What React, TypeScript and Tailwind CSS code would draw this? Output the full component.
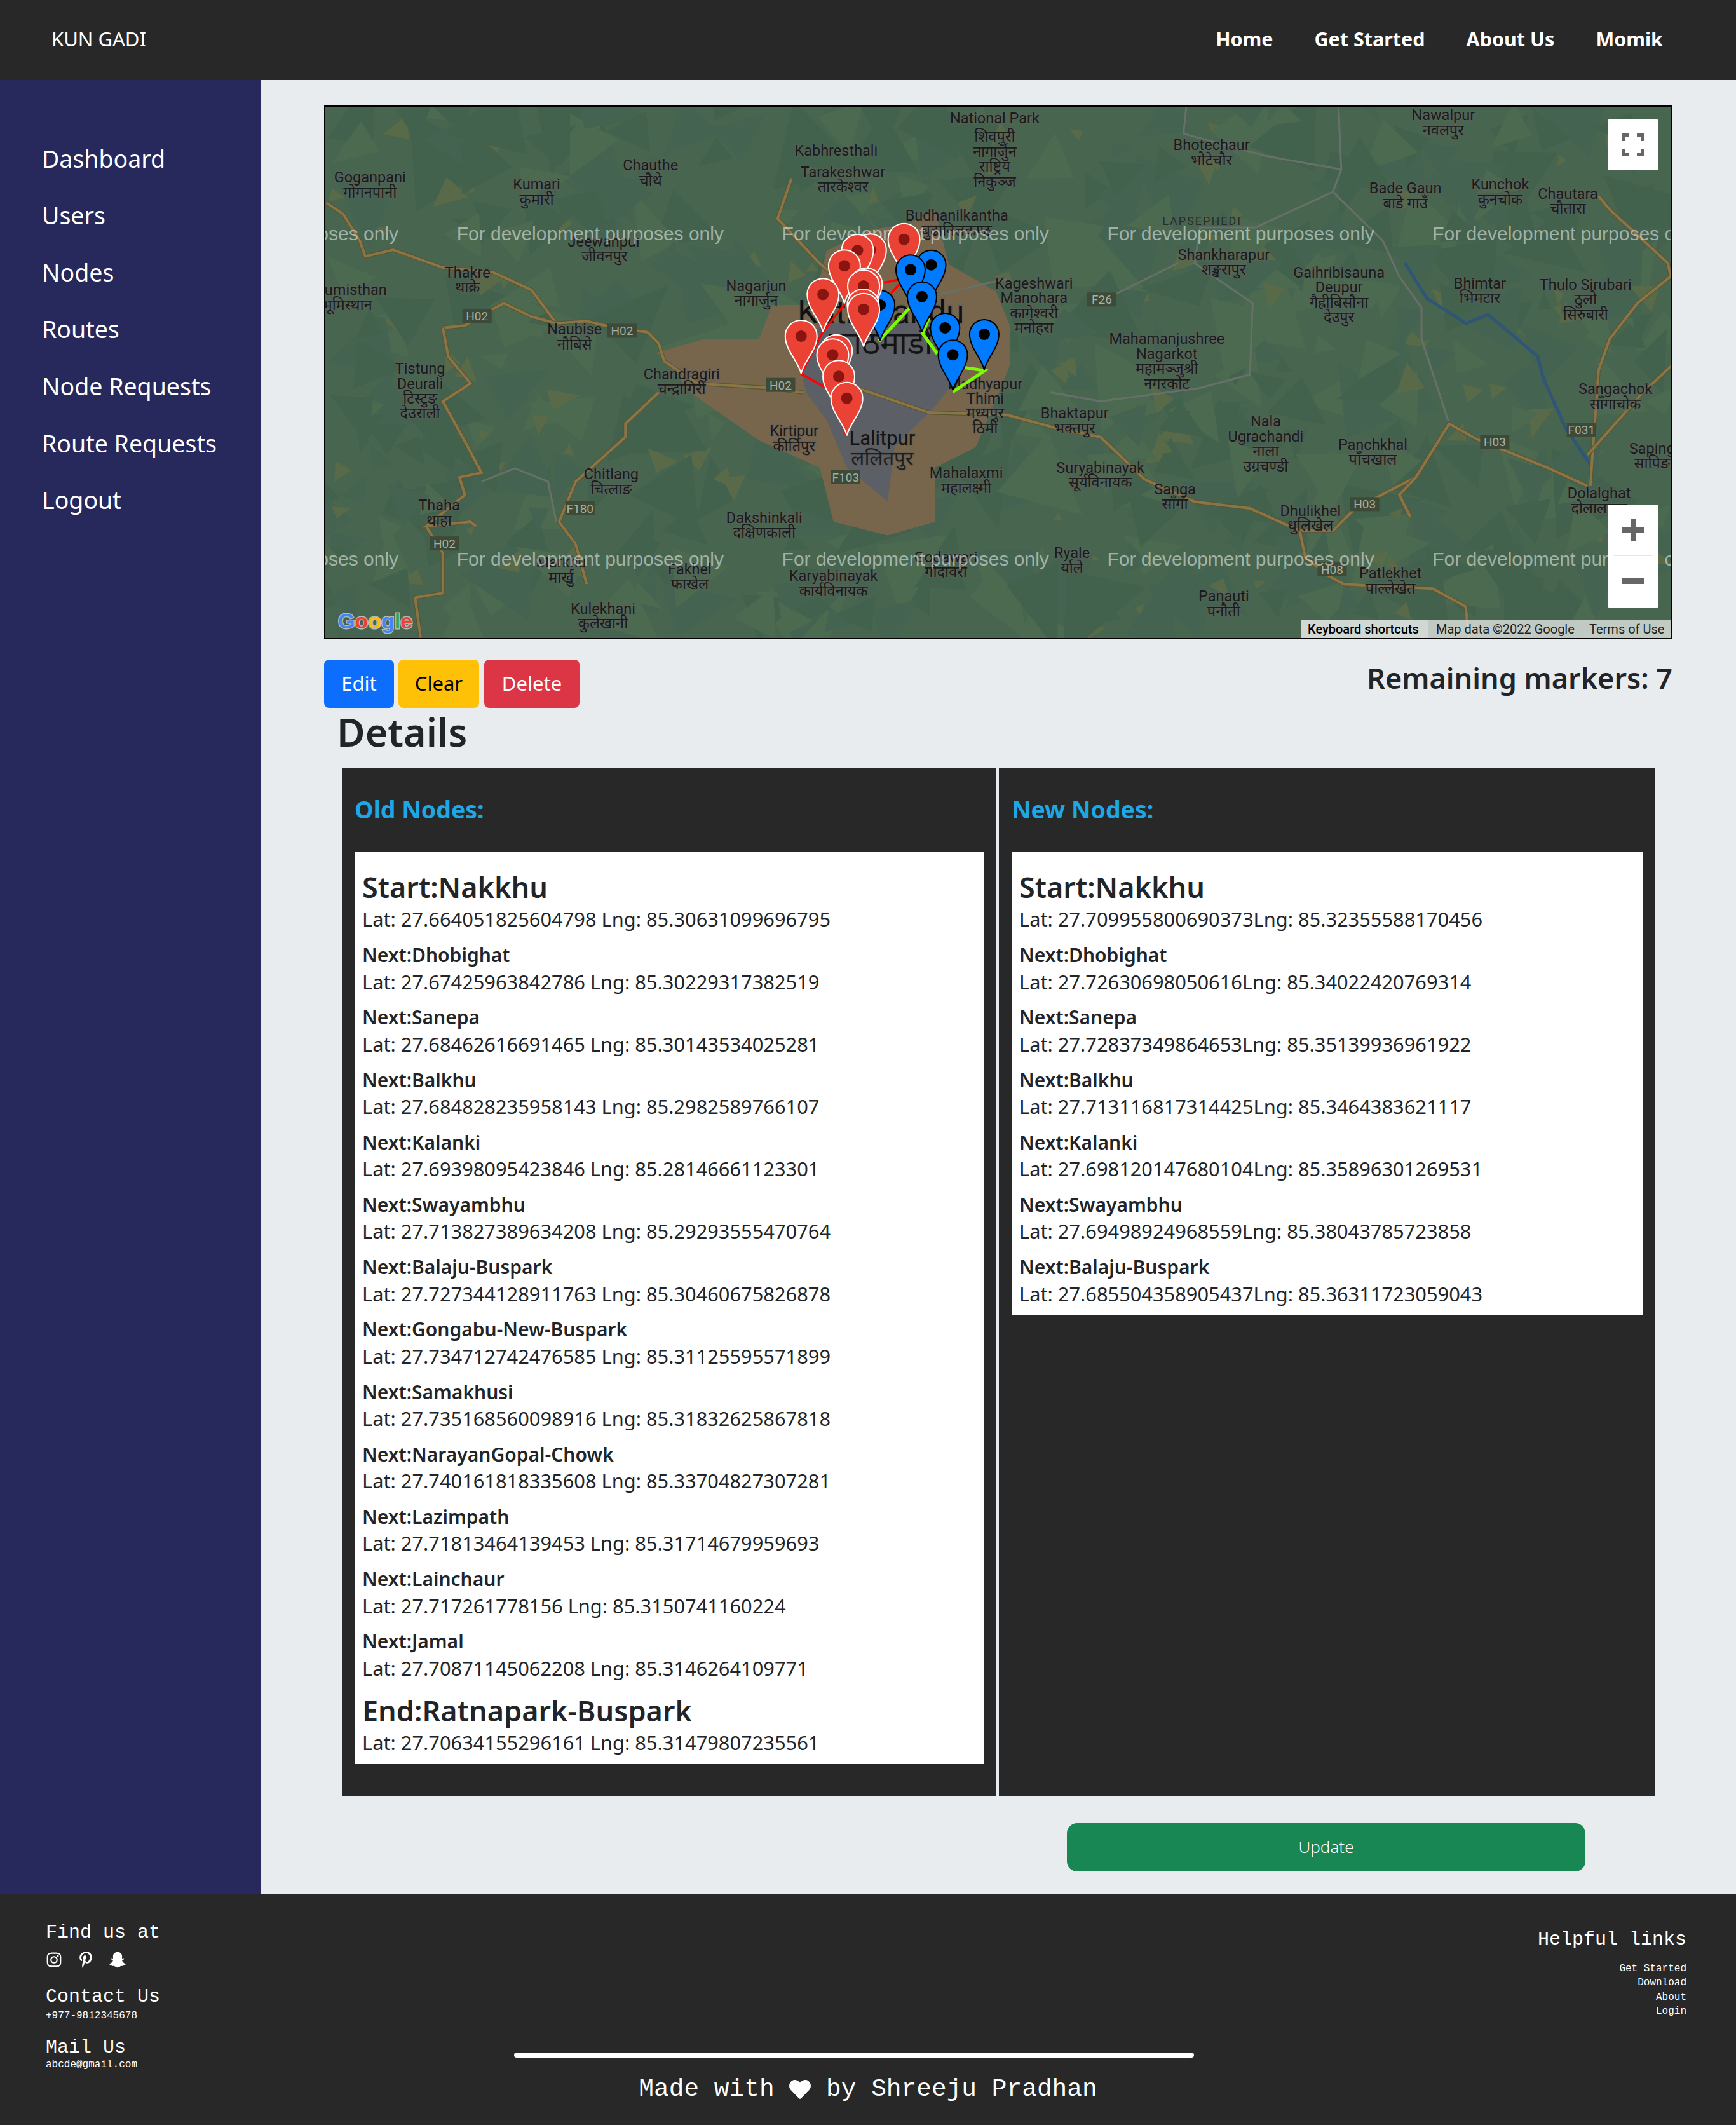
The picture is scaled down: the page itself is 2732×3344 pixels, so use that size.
import React from "react";
import { FaInstagram, FaPinterestP, FaSnapchatGhost, FaHeart } from "react-icons/fa";

const SH = 2.1327;

type Pt = [number, number];

// coordinates read off the different crops, all turned into page pixels
const sh = (p: Pt[]) => p.map(([x, y]) => `${(x * SH).toFixed(1)},${(y * SH).toFixed(1)}`).join(" ");
const z1 = (p: Pt[]) => p.map(([x, y]) => `${(x / 1.148).toFixed(1)},${(y / 1.425).toFixed(1)}`).join(" ");
const z3 = (p: Pt[]) => p.map(([x, y]) => `${(1366 + x / 1.148).toFixed(1)},${(y / 1.425).toFixed(1)}`).join(" ");
const z2 = (x: number, y: number): Pt => [1100 + x / 2.613, 250 + y / 3];

const oldNodes = [
  ["Dhobighat", "27.67425963842786", "85.30229317382519"],
  ["Sanepa", "27.68462616691465", "85.30143534025281"],
  ["Balkhu", "27.684828235958143", "85.2982589766107"],
  ["Kalanki", "27.69398095423846", "85.28146661123301"],
  ["Swayambhu", "27.713827389634208", "85.29293555470764"],
  ["Balaju-Buspark", "27.727344128911763", "85.30460675826878"],
  ["Gongabu-New-Buspark", "27.734712742476585", "85.31125595571899"],
  ["Samakhusi", "27.735168560098916", "85.31832625867818"],
  ["NarayanGopal-Chowk", "27.740161818335608", "85.33704827307281"],
  ["Lazimpath", "27.71813464139453", "85.31714679959693"],
  ["Lainchaur", "27.717261778156", "85.3150741160224"],
  ["Jamal", "27.70871145062208", "85.3146264109771"],
];

const newNodes = [
  ["Dhobighat", "27.72630698050616", "85.34022420769314"],
  ["Sanepa", "27.72837349864653", "85.35139936961922"],
  ["Balkhu", "27.713116817314425", "85.3464383621117"],
  ["Kalanki", "27.698120147680104", "85.35896301269531"],
  ["Swayambhu", "27.69498924968559", "85.38043785723858"],
  ["Balaju-Buspark", "27.685504358905437", "85.36311723059043"],
];

const labels: [number, number, string[]][] = [
  [273, 131, ["Goganpani", "गोगनपानी"]],
  [396, 136, ["Kumari", "कुमारी"]],
  [480, 122, ["Chauthe", "चौथे"]],
  [617, 111, ["Kabhresthali"]],
  [622, 127, ["Tarakeshwar", "तारकेश्वर"]],
  [446, 178, ["Jeewanpur", "जीवनपुर"]],
  [345, 201, ["Thakre", "थाक्रे"]],
  [558, 211, ["Nagarjun", "नागार्जुन"]],
  [424, 243, ["Naubise", "नौबिसे"]],
  [310, 272, ["Tistung", "Deurali", "टिस्टुङ", "देउराली"]],
  [503, 276, ["Chandragiri", "चन्द्रागिरी"]],
  [586, 318, ["Kirtipur", "कीर्तिपुर"]],
  [451, 350, ["Chitlang", "चित्लाङ"]],
  [324, 373, ["Thaha", "थाहा"]],
  [564, 382, ["Dakshinkali", "दक्षिणकाली"]],
  [414, 415, ["Markhu", "मार्खु"]],
  [509, 420, ["Fakhel", "फाखेल"]],
  [615, 425, ["Karyabinayak", "कार्यविनायक"]],
  [445, 449, ["Kulekhani", "कुलेखानी"]],
  [256, 214, ["Bhumisthan", "भूमिस्थान"]],
  [734, 87, ["National Park"]],
  [734, 101, ["शिवपुरी", "नागार्जुन", "राष्ट्रिय", "निकुञ्ज"]],
  [706, 159, ["Budhanilkantha", "बुढानिलकण्ठ"]],
  [894, 107, ["Bhotechaur", "भोटेचौर"]],
  [1065, 85, ["Nawalpur", "नवलपुर"]],
  [1037, 139, ["Bade Gaun", "बाडे गाउँ"]],
  [1107, 136, ["Kunchok", "कुनचोक"]],
  [1157, 143, ["Chautara", "चौतारा"]],
  [903, 188, ["Shankharapur", "शङ्खरापुर"]],
  [763, 209, ["Kageshwari", "Manohara", "कागेश्वरी", "मनोहरा"]],
  [988, 201, ["Gaihribisauna", "Deupur", "गैह्रीबिसौना", "देउपुर"]],
  [1092, 209, ["Bhimtar", "भिमटार"]],
  [1170, 210, ["Thulo Sirubari", "ठुलो", "सिरुबारी"]],
  [861, 250, ["Mahamanjushree", "Nagarkot", "महामञ्जुश्री", "नगरकोट"]],
  [727, 283, ["Madhyapur", "Thimi", "मध्यपुर", "ठिमी"]],
  [793, 305, ["Bhaktapur", "भक्तपुर"]],
  [1192, 287, ["Sangachok", "साँगाचोक"]],
  [934, 311, ["Nala", "Ugrachandi", "नाला", "उग्रचण्डी"]],
  [1013, 328, ["Panchkhal", "पाँचखाल"]],
  [1219, 331, ["Saping", "सापिङ"]],
  [1180, 364, ["Dolalghat", "दोलालघाट"]],
  [713, 349, ["Mahalaxmi", "महालक्ष्मी"]],
  [812, 345, ["Suryabinayak", "सूर्यविनायक"]],
  [867, 361, ["Sanga", "साँगा"]],
  [967, 377, ["Dhulikhel", "धुलिखेल"]],
  [698, 411, ["Godawari", "गोदावरी"]],
  [791, 408, ["Ryale", "र्याले"]],
  [1026, 423, ["Patlekhet", "पाल्लेखेत"]],
  [903, 440, ["Panauti", "पनौती"]],
];

const badges: [number, number, string][] = [
  [352, 233, "H02"], [459, 244, "H02"], [576, 284, "H02"], [328, 401, "H02"],
  [428, 375, "F180"], [624, 352, "F103"], [813, 221, "F26"], [1103, 326, "H03"],
  [1007, 372, "H03"], [983, 420, "H08"], [1167, 317, "F031"],
];

const roads = [
  z1([[590, 455], [620, 480], [650, 540], [660, 575], [710, 560], [800, 600], [890, 610], [960, 650], [1005, 725], [1060, 720], [1110, 735], [1170, 745], [1190, 770], [1200, 810], [1260, 860], [1390, 870], [1450, 880]]),
  z1([[800, 735], [840, 730], [880, 700], [910, 680], [960, 710], [1005, 725]]),
  z1([[800, 735], [810, 800], [850, 860], [800, 900], [840, 990], [870, 1060], [830, 1070], [840, 1110], [770, 1180], [850, 1170], [860, 1180]]),
  z1([[770, 1180], [800, 1240], [800, 1330], [750, 1340], [760, 1430]]),
  z1([[1190, 880], [1130, 950], [1130, 980], [1040, 1080], [1010, 1170], [1040, 1220], [1060, 1310]]),
  z1([[1430, 400], [1405, 490], [1480, 590], [1530, 640]]),
  z3([[-20, 870], [110, 925], [250, 930], [340, 960], [420, 980], [500, 1075], [590, 1125], [690, 1140], [780, 1190], [840, 1190], [880, 1140], [990, 1070], [1050, 950], [1100, 985], [1150, 1010], [1230, 1050], [1300, 1090]]),
  z3([[780, 1190], [790, 1250], [830, 1290], [860, 1310], [1020, 1320], [1080, 1360], [1085, 1432]]),
  z3([[990, 1070], [960, 1110], [980, 1160]]),
  z3([[1320, 440], [1340, 470], [1445, 590], [1450, 620], [1390, 680], [1340, 760], [1320, 830], [1310, 1000], [1305, 1090]]),
  z3([[1452, 820], [1400, 880], [1300, 1020]]),
];

const minorRoads = [
  z1([[870, 1080], [930, 1050], [990, 1080], [1005, 1170]]),
  z3([[850, 240], [855, 380], [840, 430], [930, 540], [960, 620], [1000, 690], [1000, 760], [1050, 950]]),
  z3([[840, 430], [700, 510], [600, 510], [590, 590], [695, 680], [690, 840], [600, 870], [420, 900], [330, 880]]),
  z3([[575, 240], [570, 300], [720, 350], [855, 380]]),
  z3([[430, 670], [560, 590]]),
  z3([[250, 625], [130, 660]]),
];

// low poly relief, seeded so that every load gives the same picture
const relief = (() => {
  let seed = 7;
  const rnd = () => {
    seed = (seed * 16807) % 2147483647;
    return seed / 2147483647;
  };
  const out: { d: string; fill: string }[] = [];
  for (let i = 0; i < 560; i++) {
    const x = 512 + rnd() * 2118;
    const y = 168 + rnd() * 836;
    const k = rnd();
    const olive = k < 0.2;
    const s = olive ? 8 + rnd() * 20 : 20 + rnd() * 50;
    const a = rnd() * 6.28;
    const p = [0, 2.2, 4.1].map((t) => {
      const r = s * (0.5 + rnd());
      return `${(x + Math.cos(a + t) * r).toFixed(0)},${(y + Math.sin(a + t) * r).toFixed(0)}`;
    });
    out.push({ d: p.join(" "), fill: olive ? "#586a48" : k < 0.5 ? "#43624d" : k < 0.75 ? "#4b6a50" : "#446350" });
  }
  return out;
})();

const redPins: Pt[] = [
  z2(843, 380), z2(705, 430), z2(652, 432), z2(598, 505), z2(688, 590), z2(677, 600),
  z2(510, 640), z2(420, 837), z2(565, 905), z2(550, 925), z2(575, 1027), z2(675, 690), z2(677, 710), z2(608, 1130),
];
const bluePins: Pt[] = [z2(955, 500), z2(870, 523), z2(917, 650), z2(1012, 798), z2(1044, 925), z2(1173, 828)];

const redLines: Pt[][] = [
  [z2(608, 1308), z2(530, 1085), z2(420, 1015), z2(510, 815), z2(600, 685)],
  [z2(790, 635), z2(825, 590)],
  [z2(760, 585), z2(820, 570)],
];
const greenLines: Pt[][] = [
  [z2(740, 860), z2(865, 705)],
  [z2(945, 750), z2(920, 825), z2(980, 920)],
  [z2(1090, 985), z2(1175, 1000), z2(1044, 1100)],
];

const pagePts = (p: Pt[]) => p.map(([x, y]) => `${x.toFixed(1)},${y.toFixed(1)}`).join(" ");

const Pin = ({ at, blue }: { at: Pt; blue?: boolean }) => (
  <g transform={`translate(${at[0]} ${at[1]})`}>
    {blue ? (
      <>
        <path d="M0,56 C-4,38 -23,21 -23,0 A23,23 0 1 1 23,0 C23,21 4,38 0,56 Z" fill="#007bff" stroke="#000" strokeWidth="2" />
        <circle r="9" fill="#000" />
      </>
    ) : (
      <>
        <path d="M0,59 C-4,40 -25,22 -25,0 A25,25 0 1 1 25,0 C25,22 4,40 0,59 Z" fill="#ea4335" stroke="#fff" strokeWidth="2" />
        <circle r="9" fill="#8a1410" />
      </>
    )}
  </g>
);

const MapLayer = () => (
  <svg viewBox="512 168 2118 836" className="block w-[2118px] h-[836px]">
    <rect x="512" y="168" width="2118" height="836" fill="#47654f" />
    {relief.map((t, i) => (
      <polygon key={i} points={t.d} fill={t.fill} />
    ))}
    <polygon
      fill="#77664c"
      points={sh([[485, 260], [510, 290], [560, 325], [605, 345], [615, 385], [655, 395], [690, 385], [690, 345], [720, 330], [735, 295], [745, 270], [745, 240], [735, 215], [700, 195], [690, 155], [670, 165], [640, 170], [610, 185], [600, 225], [570, 225], [560, 250], [520, 250]])}
    />
    <polygon
      fill="#5c5f66"
      points={sh([[590, 270], [605, 240], [640, 235], [700, 240], [705, 280], [690, 300], [660, 330], [655, 370], [625, 345], [610, 310], [595, 290]])}
    />
    {minorRoads.map((r, i) => (
      <polyline key={i} points={r} fill="none" stroke="#68706a" strokeWidth="3" />
    ))}
    <polyline
      points={pagePts([[2211, 414], [2246, 470], [2307, 509], [2342, 495], [2420, 561], [2429, 596], [2464, 674], [2507, 737]])}
      fill="none"
      stroke="#2f5577"
      strokeWidth="5"
    />
    {roads.map((r, i) => (
      <g key={i}>
        <polyline points={r} fill="none" stroke="#55573a" strokeWidth="6.5" />
        <polyline points={r} fill="none" stroke="#8d7443" strokeWidth="4" />
      </g>
    ))}
    <g fontFamily="Roboto, 'Noto Sans', sans-serif" textAnchor="middle">
      <text x={650 * SH} y={230 * SH + 18} fontSize="51" fill="#111" stroke="#5a5a5a" strokeOpacity="0.5" strokeWidth="3" paintOrder="stroke">Kathmandu</text>
      <text x={650 * SH} y={253 * SH + 17} fontSize="50" fill="#141414" stroke="#5a5a5a" strokeOpacity="0.5" strokeWidth="3" paintOrder="stroke">काठमाडौं</text>
      <text x={651 * SH} y={323 * SH + 11} fontSize="31" fill="#141414" stroke="#5a5a5a" strokeOpacity="0.5" strokeWidth="3" paintOrder="stroke">Lalitpur</text>
      <text x={651 * SH} y={338 * SH + 11} fontSize="31" fill="#1e1e1e" stroke="#5a5a5a" strokeOpacity="0.5" strokeWidth="3" paintOrder="stroke">ललितपुर</text>
      {labels.map(([x, y, lines]) =>
        lines.map((line, i) => (
          <text
            key={line + x}
            x={x * SH}
            y={(y + i * 11) * SH + 8}
            fontSize="23.5"
            fill="#1b1b1b"
            stroke="#5f5f5f"
            strokeOpacity="0.55"
            strokeWidth="3"
            paintOrder="stroke"
          >
            {line}
          </text>
        ))
      )}
      <text x={887 * SH} y={163 * SH + 6} fontSize="18" letterSpacing="2" fill="#2c2c2c">LAPSEPHEDI</text>
      {badges.map(([x, y, name]) => (
        <g key={name + x}>
          <rect x={x * SH - 23} y={y * SH - 11} width="46" height="22" fill="#3d4a37" />
          <text x={x * SH} y={y * SH + 7} fontSize="19" fill="#a7aea2">{name}</text>
        </g>
      ))}
    </g>
    <g fontFamily="'Liberation Sans', sans-serif" fontSize="30" fill="#fff" fillOpacity="0.5">
      {[97, 337, 577, 817, 1057].map((x) =>
        [172, 412].map((y) => (
          <text key={`${x}-${y}`} x={x * SH} y={y * SH + 11}>For development purposes only</text>
        ))
      )}
    </g>
    {redLines.map((l, i) => (
      <polyline key={i} points={pagePts(l)} fill="none" stroke="#ff0000" strokeWidth="3.5" />
    ))}
    {greenLines.map((l, i) => (
      <polyline key={i} points={pagePts(l)} fill="none" stroke="#7cfc00" strokeWidth="5" />
    ))}
    <Pin at={z2(745, 690)} blue />
    {redPins.slice(0, 1).map((p, i) => (
      <Pin key={i} at={p} />
    ))}
    {bluePins.map((p, i) => (
      <Pin key={i} at={p} blue />
    ))}
    {redPins.slice(1).map((p, i) => (
      <Pin key={i} at={p} />
    ))}
    <text x="532" y="989" fontFamily="'Liberation Sans', sans-serif" fontSize="34" fontWeight="700" stroke="#d8d8d8" strokeOpacity="0.75" strokeWidth="3" paintOrder="stroke">
      <tspan fill="#4285f4">G</tspan>
      <tspan fill="#ea4335">o</tspan>
      <tspan fill="#fbbc05">o</tspan>
      <tspan fill="#4285f4">g</tspan>
      <tspan fill="#34a853">l</tspan>
      <tspan fill="#ea4335">e</tspan>
    </text>
  </svg>
);

const MapBox = () => (
  <div className="relative w-[2122px] h-[840px] border-2 border-black overflow-hidden">
    <MapLayer />
    <button className="absolute top-[20px] right-[20px] w-[80px] h-[80px] bg-white flex items-center justify-center rounded-[2px]">
      <svg viewBox="0 0 36 36" className="w-[36px] h-[36px]" fill="none" stroke="#666" strokeWidth="5">
        <path d="M2.5 12V2.5H12M24 2.5H33.5V12M33.5 24V33.5H24M12 33.5H2.5V24" />
      </svg>
    </button>
    <div className="absolute top-[626px] right-[20px] w-[80px] h-[162px] bg-white rounded-[2px] flex flex-col items-center">
      <svg viewBox="0 0 36 36" className="w-[36px] h-[36px] mt-[22px]" fill="#666">
        <path d="M14 0h8v14h14v8H22v14h-8V22H0v-8h14z" />
      </svg>
      <div className="w-[60px] h-[2px] bg-[#e6e6e6] mt-[21px]" />
      <svg viewBox="0 0 36 10" className="w-[36px] h-[10px] mt-[34px]" fill="#666">
        <path d="M0 0h36v10H0z" />
      </svg>
    </div>
    <div className="absolute bottom-0 right-0 h-[28px] w-[582px] flex items-center text-[20px] text-[#222] font-['Roboto',sans-serif] leading-none">
      <span className="h-full w-[199px] bg-[#f5f5f5]/80 pl-[10px] flex items-center font-medium text-black whitespace-nowrap">Keyboard shortcuts</span>
      <span className="h-full w-[242px] bg-[#f5f5f5]/70 border-l border-[#999] pl-[12px] flex items-center whitespace-nowrap">Map data ©2022 Google</span>
      <span className="h-full w-[141px] bg-[#f5f5f5]/70 border-l border-[#999] pl-[11px] flex items-center whitespace-nowrap">Terms of Use</span>
    </div>
  </div>
);

const NodeBlock = ({ title, lat, lng, big, tight }: { title: string; lat: string; lng: string; big?: boolean; tight?: boolean }) => (
  <div className={big ? "" : "mt-[13.8px]"}>
    <div className={big ? "text-[45px] leading-[57.6px] font-semibold text-[#212529]" : "text-[30px] leading-[38.4px] font-semibold text-[#212529]"}>
      {title}
    </div>
    <div className="-mt-[2px] text-[30.8px] leading-[48px] text-[#212529] whitespace-nowrap">
      Lat: {lat}
      {tight ? "" : " "}Lng: {lng}
    </div>
  </div>
);

const navItems = ["Dashboard", "Users", "Nodes", "Routes", "Node Requests", "Route Requests", "Logout"];

export default function App() {
  return (
    <div className="w-[2732px] h-[3344px] flex flex-col font-['Noto_Sans',sans-serif] bg-[#e9ecef]">
      <header className="h-[126px] shrink-0 bg-[#282828] text-white flex items-center justify-between pl-[81px] pr-[115px] pb-[3px]">
        <span className="text-[31px]">KUN GADI</span>
        <nav className="flex gap-[65px] text-[30.5px] font-bold">
          <a>Home</a>
          <a>Get Started</a>
          <a>About Us</a>
          <a>Momik</a>
        </nav>
      </header>

      <div className="flex h-[2854px]">
        <aside className="w-[410px] shrink-0 bg-[#27285c] pt-[79px] pl-[66px] text-white">
          {navItems.map((item) => (
            <div key={item} className="h-[89.6px] flex items-center text-[37.5px] whitespace-nowrap">
              {item}
            </div>
          ))}
        </aside>

        <main className="flex-1 pt-[40px] pl-[100px]">
          <MapBox />

          <div className="w-[2122px] mt-[32px] flex justify-between items-start">
            <div className="flex">
              <button className="h-[76px] w-[110px] pb-[2px] rounded-[8px] bg-[#0d6efd] text-white text-[31px]">Edit</button>
              <button className="h-[76px] w-[127px] pb-[2px] ml-[7px] rounded-[8px] bg-[#ffc107] text-black text-[31px]">Clear</button>
              <button className="h-[76px] w-[150px] pb-[2px] ml-[8px] rounded-[8px] bg-[#dc3545] text-white text-[31px]">Delete</button>
            </div>
            <div className="text-[45px] leading-[57.6px] font-semibold text-[#212529]">Remaining markers: 7</div>
          </div>

          <h2 className="ml-[20px] text-[61px] leading-[76.8px] font-semibold text-[#212529]">Details</h2>

          <div className="ml-[28px] mt-[17px] w-[2067px] grid grid-cols-[1030px_1033px] gap-[4px]">
            <section className="bg-[#282828] h-[1619px] px-[20px]">
              <div className="h-[133px] flex items-center text-[37.5px] font-bold text-[#1ea7e6]">Old Nodes:</div>
              <div className="bg-white pt-[26px] pb-[10px] px-[12px]">
                <NodeBlock big title="Start:Nakkhu" lat="27.664051825604798" lng="85.30631099696795" />
                {oldNodes.map(([name, lat, lng]) => (
                  <NodeBlock key={name} title={`Next:${name}`} lat={lat} lng={lng} />
                ))}
                <div className="mt-[13.8px]">
                  <NodeBlock big title="End:Ratnapark-Buspark" lat="27.70634155296161" lng="85.31479807235561" />
                </div>
              </div>
            </section>
            <section className="bg-[#282828] h-[1619px] px-[20px]">
              <div className="h-[133px] flex items-center text-[37.5px] font-bold text-[#1ea7e6]">New Nodes:</div>
              <div className="bg-white pt-[26px] pb-[10px] px-[12px]">
                <NodeBlock big tight title="Start:Nakkhu" lat="27.709955800690373" lng="85.32355588170456" />
                {newNodes.map(([name, lat, lng]) => (
                  <NodeBlock key={name} tight title={`Next:${name}`} lat={lat} lng={lng} />
                ))}
              </div>
            </section>
            <div />
            <div className="flex justify-center pr-[3px] mt-[38px]">
              <button className="w-[816px] h-[76px] rounded-[16px] bg-[#198754] text-white text-[26px] font-light">Update</button>
            </div>
          </div>
        </main>
      </div>

      <footer className="h-[364px] bg-[#282828] text-white grid grid-cols-[809px_1114px_809px] font-['Liberation_Mono',monospace]">
        <div className="pl-[72px] pt-[43px]">
          <div className="text-[30px] leading-[36px]">Find us at</div>
          <div className="mt-[12px] h-[26px] flex items-center text-[26px]">
            <FaInstagram />
            <FaPinterestP className="ml-[24px]" />
            <FaSnapchatGhost className="ml-[24px]" />
          </div>
          <div className="mt-[27px] text-[30px] leading-[36px]">Contact Us</div>
          <div className="mt-[2px] text-[16px] leading-[20px]">+977-9812345678</div>
          <div className="mt-[22px] text-[30px] leading-[36px]">Mail Us</div>
          <div className="text-[16px] leading-[19px]">abcde@gmail.com</div>
        </div>
        <div className="pt-[250px]">
          <div className="w-[1070px] h-[8px] rounded-full bg-white" />
          <div className="mt-[20px] text-[39.5px] leading-[60px] flex items-center justify-center whitespace-pre">
            Made with <FaHeart className="text-[34px]" /> by Shreeju Pradhan
          </div>
        </div>
        <div className="pr-[78px] pt-[54px] text-right">
          <div className="text-[30px] leading-[36px]">Helpful links</div>
          <div className="mt-[17px] text-[16px] leading-[22.3px]">
            <div>Get Started</div>
            <div>Download</div>
            <div>About</div>
            <div>Login</div>
          </div>
        </div>
      </footer>
    </div>
  );
}
